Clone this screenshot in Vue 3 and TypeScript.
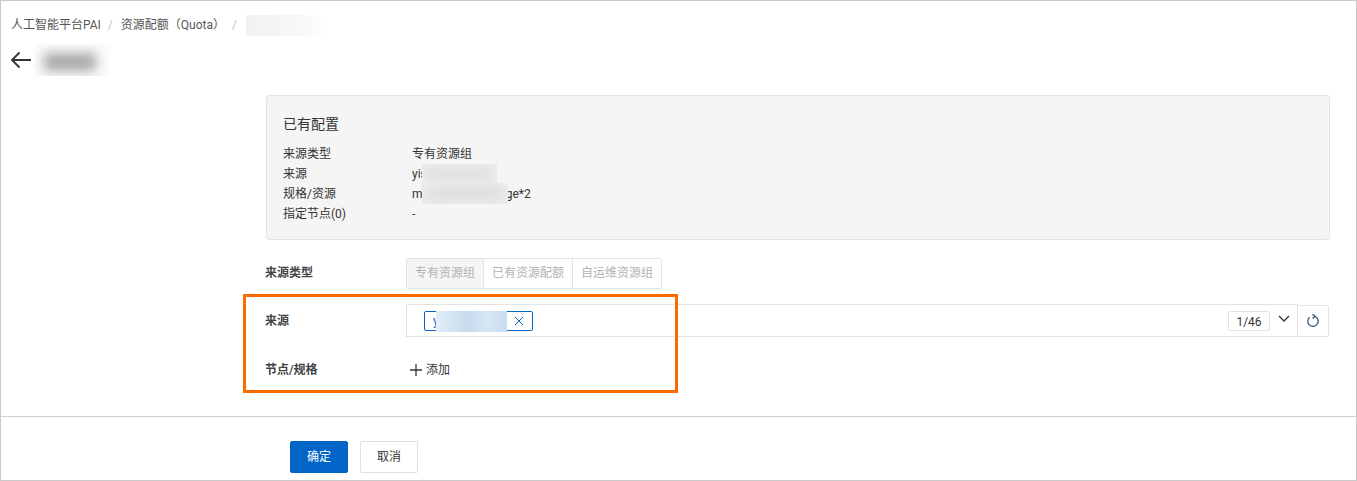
<script setup lang="ts">
const info: { label: string; value: string; blur?: string }[] = [
  { label: '来源类型', value: '专有资源组' },
  { label: '来源', value: 'yis', blur: 'b1' },
  { label: '规格/资源', value: 'mxxxxxxxxxxxxxxge*2', blur: 'b2' },
  { label: '指定节点(0)', value: '-' },
]
const segments: string[] = ['专有资源组', '已有资源配额', '自运维资源组']
</script>

<template>
  <div class="page">
    <div class="crumbs">
      <span>人工智能平台PAI</span>
      <span class="sep">/</span>
      <span>资源配额（Quota）</span>
      <span class="sep sep2">/</span>
      <span class="smudge crumb-smudge"></span>
    </div>
    <div class="title">
      <svg class="back" width="22" height="18" viewBox="0 0 22 18" fill="none" stroke="#333" stroke-width="1.8">
        <path d="M21 9H2M9.5 1.5 2 9l7.5 7.5" />
      </svg>
      <span class="smudge title-smudge"><i></i></span>
    </div>

    <div class="body">
      <section class="panel">
        <h3>已有配置</h3>
        <div v-for="row in info" :key="row.label" class="info-row">
          <span class="info-label">{{ row.label }}</span>
          <span class="info-value">
            {{ row.value }}
            <span v-if="row.blur" class="smudge" :class="row.blur"><i></i></span>
          </span>
        </div>
      </section>

      <div class="form">
        <div class="form-row first">
          <label>来源类型</label>
          <div class="segments">
            <span v-for="(s, i) in segments" :key="s" class="segment" :class="{ active: i === 0 }">{{ s }}</span>
          </div>
        </div>
        <div class="form-row second">
          <label>来源</label>
          <div class="picker">
            <div class="select">
              <span class="tag">
                <span class="tag-text">y</span>
                <span class="tag-smudge"></span>
                <svg width="10" height="10" viewBox="0 0 10 10" stroke="#0064c8" stroke-width="1" fill="none">
                  <path d="M1 1l8 8M9 1 1 9" />
                </svg>
              </span>
              <span class="count">1/46</span>
              <svg class="chevron" width="12" height="8" viewBox="0 0 12 8" fill="none" stroke="#333" stroke-width="1.3">
                <path d="M1 1l5 5 5-5" />
              </svg>
            </div>
            <button class="refresh" type="button" aria-label="刷新">
              <svg width="14" height="14" viewBox="0 0 14 14" fill="none" stroke="#2f4a66" stroke-width="1.2">
                <path d="M8.8 2.3A5.2 5.2 0 1 1 3.6 3.2" />
                <path d="M6.4 .2 8.9 2.3 6.6 4.5" />
              </svg>
            </button>
          </div>
        </div>
        <div class="form-row third">
          <label>节点/规格</label>
          <span class="add">
            <svg width="12" height="12" viewBox="0 0 12 12" stroke="#333" stroke-width="1.3" fill="none">
              <path d="M6 0v12M0 6h12" />
            </svg>
            添加
          </span>
        </div>
        <div class="highlight"></div>
      </div>
    </div>

    <footer class="footer">
      <button class="btn primary" type="button">确定</button>
      <button class="btn" type="button">取消</button>
    </footer>
  </div>
</template>

<style>
html, body { margin: 0; background: #fff; }
</style>

<style scoped>
.page {
  position: relative;
  width: 1357px;
  height: 481px;
  box-sizing: border-box;
  border: 1px solid #c9c9c9;
  background: #fff;
  color: #333;
  font: 12px/20px Roboto, "Noto Sans CJK SC", sans-serif;
  overflow: hidden;
}
.crumbs {
  display: flex;
  align-items: center;
  height: 20px;
  margin: 14px 0 0 10px;
  color: #555;
}
.sep { margin: 0 8px 0 7px; color: #c4c4c4; }
.sep2 { margin: 0 9px 0 7px; }
.smudge { display: inline-block; position: relative; overflow: hidden; background: #fbfbfb; }
.smudge i { position: absolute; inset: 6px; background: #b8b8b8; filter: blur(6px); }
.crumb-smudge {
  width: 84px;
  height: 21px;
  background: linear-gradient(90deg, #f2f2f2, #f7f7f7 60%, #fff);
}
.title {
  display: flex;
  align-items: center;
  height: 32px;
  margin: 9px 0 0 9px;
}
.back { display: block; }
.title-smudge { width: 76px; height: 32px; margin-left: 2px; }
.title-smudge i { inset: 9px 14px 5px 10px; background: #a8a8a8; }
.body { margin: 19px 26px 0 242px; }
.panel {
  margin-left: 23px;
  height: 145px;
  box-sizing: border-box;
  padding: 18px 16px 0;
  background: #f5f5f5;
  border: 1px solid #e3e3e3;
  border-radius: 3px;
}
.panel h3 {
  margin: 0 0 10px;
  font-size: 14px;
  line-height: 20px;
  font-weight: 400;
  color: #333;
}
.info-row { display: flex; height: 20px; }
.info-label { width: 129px; flex: none; }
.info-value { position: relative; white-space: nowrap; }
.info-value .smudge { position: absolute; background: #ececec; }
.info-value .smudge i { background: #d8d8d8; }
.b1 { left: 10px; top: 0; width: 75px; height: 20px; }
.b2 { left: 10px; top: -1px; width: 86px; height: 21px; }
.form { position: relative; padding: 17px 0 0 22px; }
.form-row { display: flex; align-items: center; }
.form-row label { width: 141px; flex: none; font-weight: 600; color: #444; }
.first { height: 32px; }
.second { height: 33px; margin-top: 15px; }
.third { height: 20px; margin-top: 23px; }
.segments { display: flex; height: 31px; box-sizing: border-box; border: 1px solid #e3e3e3; border-radius: 2px; }
.segment {
  display: flex;
  align-items: center;
  justify-content: center;
  color: #b3b3b3;
  border-left: 1px solid #e3e3e3;
  width: 88px;
}
.segment:first-child { border-left: 0; width: 76px; }
.segment:last-child { width: 88px; }
.segment.active { background: #f5f5f5; }
.picker { flex: 1; display: flex; align-items: flex-end; height: 33px; margin-right: 1px; }
.select {
  flex: 1;
  height: 33px;
  box-sizing: border-box;
  border: 1px solid #e3e3e3;
  display: flex;
  align-items: center;
  padding: 0 5px 0 17px;
}
.tag {
  position: relative;
  display: flex;
  align-items: center;
  width: 109px;
  height: 20px;
  box-sizing: border-box;
  border: 1px solid #0064c8;
  border-radius: 2px;
  padding-left: 8px;
  color: #0064c8;
}
.tag svg { position: absolute; left: 89px; top: 4px; }
.tag-smudge {
  position: absolute;
  left: 11px;
  top: -1px;
  width: 71px;
  height: 21px;
  background: linear-gradient(90deg, #e3eef8, #c6dbef 45%, #d8e6f4 70%, #c8dcf0);
}
.count {
  margin-left: auto;
  width: 42px;
  height: 20px;
  box-sizing: border-box;
  border: 1px solid #e3e3e3;
  border-radius: 2px;
  text-align: center;
  line-height: 20px;
}
.chevron { margin: 0 2px 4px 8px; }
.refresh {
  width: 31px;
  height: 32px;
  padding: 0;
  background: #fff;
  border: 1px solid #e3e3e3;
  border-left: 0;
  border-radius: 0 2px 2px 0;
  display: flex;
  align-items: center;
  justify-content: center;
}
.add { display: flex; align-items: center; gap: 4px; margin-left: 4px; color: #333; }
.highlight {
  position: absolute;
  left: 0;
  top: 54px;
  width: 435px;
  height: 99px;
  box-sizing: border-box;
  border: 3px solid #ff6a00;
  pointer-events: none;
}
.footer {
  position: absolute;
  left: 0;
  right: 0;
  bottom: 0;
  height: 64px;
  box-sizing: border-box;
  border-top: 1px solid #cfcfcf;
  padding: 24px 0 0 289px;
  display: flex;
  gap: 12px;
}
.btn {
  width: 58px;
  height: 32px;
  padding: 0;
  font: inherit;
  color: #333;
  background: #fff;
  border: 1px solid #e0e0e0;
  border-radius: 2px;
}
.btn.primary { background: #0064c8; border-color: #0064c8; color: #fff; }
</style>
